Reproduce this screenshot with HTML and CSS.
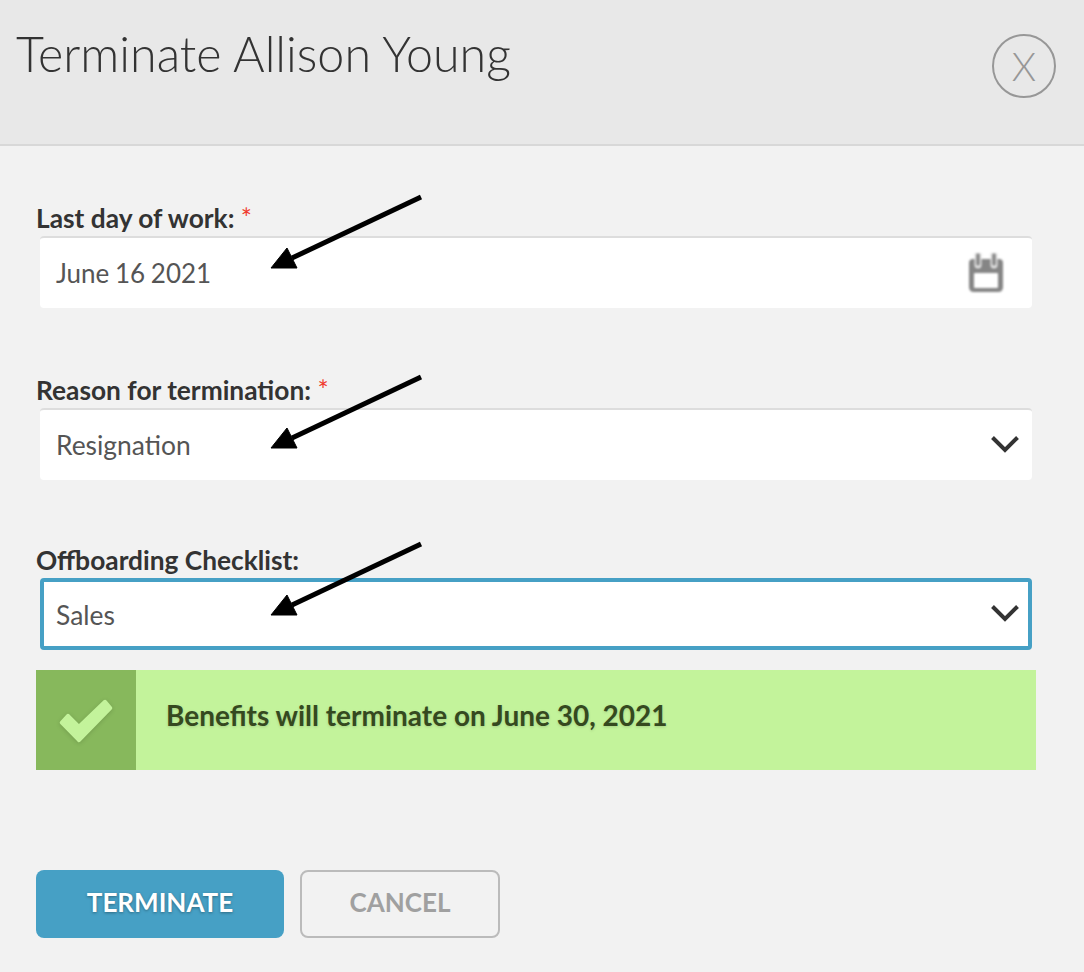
FILE: index.html
```html
<html>

<head>
    <meta charset="utf-8" />
    <title>Terminate Allison Young</title>
    <link rel="stylesheet" href="styles.css">
</head>

<body>
    <div class="header">
        <h1 class="title">Terminate Allison Young</h1>
        <div class="close">X</div>
    </div>
    <form class="form">
        <div class="field field-date">
            <label class="label">Last day of work: <span class="req">*</span></label>
            <div class="input">
                <span class="value value-date">June 16 2021</span>
                <svg class="cal" width="36" height="40" viewBox="0 0 36 40">
                    <path d="M1 10 Q1 6 5 6 H31 Q35 6 35 10 V34 Q35 39 30 39 H6 Q1 39 1 34 Z" fill="#858585" />
                    <path d="M10 1 V12 M26 1 V12" stroke="#e4e4e4" stroke-width="7" stroke-linecap="round" />
                    <path d="M10 2 V11 M26 2 V11" stroke="#858585" stroke-width="3.500" stroke-linecap="round" />
                    <rect x="6" y="20" width="24" height="15" rx="1" fill="#fff" />
                </svg>
            </div>
        </div>
        <div class="field field-reason">
            <label class="label">Reason for termination: <span class="req">*</span></label>
            <div class="input">
                <span class="value">Resignation</span>
                <svg class="chev" width="30" height="19" viewBox="0 0 30 19">
                    <path d="M2.500 2.500 L15 15 L27.500 2.500" fill="none" stroke="#333" stroke-width="4" />
                </svg>
            </div>
        </div>
        <div class="field field-list">
            <label class="label">Offboarding Checklist:</label>
            <div class="input input-focus">
                <span class="value">Sales</span>
                <svg class="chev" width="30" height="19" viewBox="0 0 30 19">
                    <path d="M2.500 2.500 L15 15 L27.500 2.500" fill="none" stroke="#333" stroke-width="4" />
                </svg>
            </div>
        </div>
        <div class="notice">
            <div class="notice-icon">
                <svg class="check" width="60" height="50" viewBox="0 0 60 50">
                    <polygon points="23,45.200 5.800,27.500 12,20.800 23,31.800 49,6.800 54.200,13" fill="#c3f39b" stroke="#c3f39b" stroke-width="4" stroke-linejoin="round" />
                </svg>
            </div>
            <div class="notice-text">Benefits will terminate on June 30, 2021</div>
        </div>
        <div class="buttons">
            <button type="button" class="btn btn-primary">TERMINATE</button>
            <button type="button" class="btn btn-cancel">CANCEL</button>
        </div>
    </form>

    <!-- arrows drawn on top of the screenshot -->
    <svg class="arrows" width="1084" height="972" viewBox="0 0 1084 972">
        <g fill="#000" stroke="#000">
            <path d="M421 197 L292 258" stroke-width="5" />
            <path d="M271 268 L287 248 L297 268 Z" stroke-width="1" />
            <path d="M421 377 L292 438" stroke-width="5" />
            <path d="M271 448 L287 428 L297 448 Z" stroke-width="1" />
            <path d="M421 544 L292 605" stroke-width="5" />
            <path d="M271 615 L287 595 L297 615 Z" stroke-width="1" />
        </g>
    </svg>
</body>

</html>
```

FILE: styles.css
```css
* {
    margin: 0;
    padding: 0;
    box-sizing: border-box;
}

body {
    background-color: #f2f2f2;
    font-family: Lato, "Open Sans", sans-serif;
    color: #333;
    height: 972px;
    overflow: hidden;
}

.header {
    display: flex;
    justify-content: space-between;
    height: 146px;
    padding: 23px 28px 0 16px;
    background-color: #e8e8e8;
    border-bottom: 2px solid #d8d8d8;
}

.title {
    font-size: 48.4px;
    font-weight: 300;
    line-height: 60px;
    color: #333;
}

.close {
    display: flex;
    align-items: center;
    justify-content: center;
    width: 64px;
    height: 64px;
    margin-top: 11px;
    border: 2px solid #979797;
    border-radius: 50%;
    font-size: 39px;
    font-weight: 300;
    color: #979797;
}

.form {
    padding: 0 52px 0 36px;
}

.field-date {
    padding-top: 55px;
}

.field-reason {
    padding-top: 65px;
}

.field-list {
    padding-top: 63px;
}

.label {
    display: block;
    height: 35px;
    font-size: 26.3px;
    font-weight: 700;
    line-height: 35px;
    color: #333;
}

.req {
    color: #f03a2e;
    font-weight: 400;
}

.input {
    display: flex;
    justify-content: space-between;
    align-items: center;
    height: 72px;
    margin-left: 4px;
    padding: 0 12px 0 16px;
    background-color: #fff;
    border-top: 2px solid #ddd;
    border-radius: 4px;
}

.input-focus {
    padding: 2px 8px 0 12px;
    border: 4px solid #46a0c5;
}

.value {
    font-size: 26.4px;
    color: #555;
}

.value-date {
    font-size: 26px;
    word-spacing: -1px;
}

.chev {
    margin-bottom: 2px;
}

.input-focus .chev {
    margin-bottom: 4px;
}

.cal {
    margin-right: 16px;
    filter: blur(1px);
}

.notice {
    display: flex;
    align-items: center;
    width: 1000px;
    height: 100px;
    margin-top: 20px;
    background-color: #c3f39b;
}

.notice-icon {
    display: flex;
    align-items: center;
    justify-content: center;
    width: 100px;
    height: 100px;
    background-color: #87b85c;
}

.check {
    filter: drop-shadow(0 1px 2px rgba(0, 0, 0, 0.15));
}

.notice-text {
    padding: 0 0 10px 30px;
    font-size: 28px;
    font-weight: 700;
    color: #35491f;
    text-shadow: 0 1px 3px rgba(0, 0, 0, 0.15);
}

.buttons {
    display: flex;
    gap: 16px;
    margin-top: 100px;
}

.btn {
    height: 68px;
    padding-bottom: 4px;
    font-family: Lato, sans-serif;
    font-size: 26px;
    font-weight: 700;
    border-radius: 8px;
}

.btn-primary {
    width: 248px;
    color: #fff;
    background-color: #46a0c5;
    border: 0;
    text-shadow: 0 1px 3px rgba(0, 0, 0, 0.35);
}

.btn-cancel {
    width: 200px;
    color: #a0a0a0;
    background-color: transparent;
    border: 2px solid #bbb;
}

.arrows {
    position: absolute;
    top: 0;
    left: 0;
}
```
